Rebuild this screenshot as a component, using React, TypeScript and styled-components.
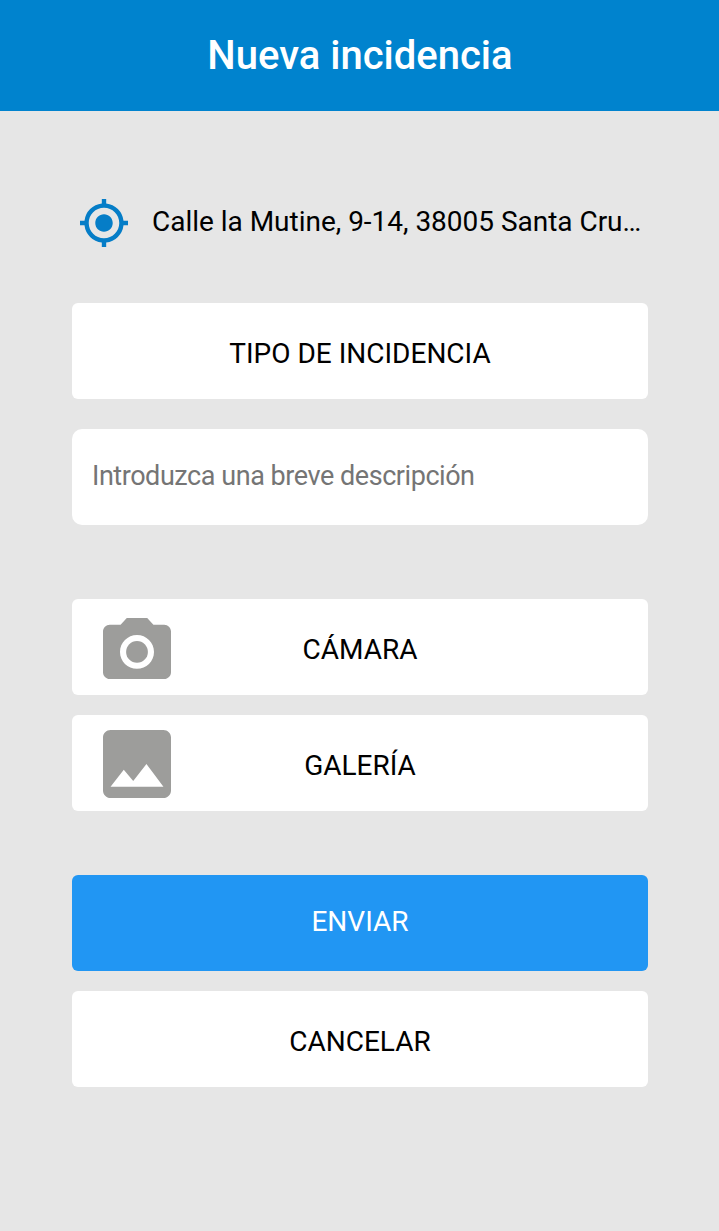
import React from "react";
import styled, { createGlobalStyle } from "styled-components";

const GlobalStyle = createGlobalStyle`
  * { box-sizing: border-box; }
  body { margin: 0; background: #e6e6e6; font-family: Roboto, "Liberation Sans", sans-serif; }
`;

const Screen = styled.div`
  min-height: 1231px;
  background: #e6e6e6;
`;

const Header = styled.header`
  display: flex;
  align-items: center;
  justify-content: center;
  height: 111px;
  padding-left: 1px;
  background: #0083ce;
`;

const Title = styled.h1`
  margin: 0;
  color: #fff;
  font-size: 40px;
  font-weight: 500;
  line-height: 48px;
`;

const Form = styled.main`
  display: flex;
  flex-direction: column;
  width: 576px;
  margin: 0 0 0 72px;
  padding-top: 87px;
`;

const Location = styled.div`
  display: flex;
  align-items: center;
  height: 50px;
  margin-bottom: 55px;
  padding-left: 8px;
  svg { flex: none; width: 48px; height: 48px; }
`;

const Address = styled.span`
  margin-left: 24px;
  width: 490px;
  overflow: hidden;
  white-space: nowrap;
  font-size: 28px;
  line-height: 40px;
  letter-spacing: -0.02px;
  padding-bottom: 3px;
`;

const Button = styled.button<{ $gap?: number; $primary?: boolean }>`
  display: grid;
  grid-template-columns: 130px 1fr 130px;
  align-items: center;
  width: 100%;
  height: 96px;
  margin: 0 0 ${(p) => p.$gap ?? 0}px;
  padding: ${(p) => (p.$primary ? "0 0 2px" : "6px 0 0")};
  border: 0;
  border-radius: 6px;
  background: ${(p) => (p.$primary ? "#2196f3" : "#fff")};
  color: ${(p) => (p.$primary ? "#fff" : "#000")};
  font: 400 28px/36px Roboto, "Liberation Sans", sans-serif;
`;

const Label = styled.span`
  grid-column: 2;
  grid-row: 1;
  white-space: nowrap;
  text-align: center;
`;

const IconSlot = styled.span`
  display: flex;
  grid-column: 1;
  grid-row: 1;
  padding: 0 0 4px 31px;
`;

const Description = styled.input`
  height: 96px;
  margin: 0 0 74px;
  padding: 0 20px 2px;
  border: 0;
  border-radius: 10px;
  background: #fff;
  font: 400 27px/36px Roboto, "Liberation Sans", sans-serif;
  letter-spacing: -0.45px;
  &::placeholder { color: #757575; opacity: 1; }
`;

const LocationIcon = () => (
  <svg viewBox="1 1 22 22" fill="#057dc7">
    <path d="M12 8c-2.210 0-4 1.790-4 4s1.790 4 4 4 4-1.790 4-4-1.790-4-4-4zm8.940 3A8.994 8.994 0 0 0 13 3.060V1h-2v2.060A8.994 8.994 0 0 0 3.060 11H1v2h2.060A8.994 8.994 0 0 0 11 20.940V23h2v-2.060A8.994 8.994 0 0 0 20.940 13H23v-2h-2.060zM12 19c-3.870 0-7-3.130-7-7s3.130-7 7-7 7 3.130 7 7-3.130 7-7 7z" />
  </svg>
);

const CameraIcon = () => (
  <svg width="68" height="61" viewBox="2 2 20 18" preserveAspectRatio="none" fill="#9d9d9b">
    <circle cx="12" cy="12" r="3.200" />
    <path d="M9 2 7.170 4H4c-1.100 0-2 .9-2 2v12c0 1.100.9 2 2 2h16c1.100 0 2-.9 2-2V6c0-1.100-.9-2-2-2h-3.170L15 2H9zm3 15c-2.760 0-5-2.240-5-5s2.240-5 5-5 5 2.240 5 5-2.240 5-5 5z" />
  </svg>
);

const GalleryIcon = () => (
  <svg width="68" height="68" viewBox="3 3 18 18" fill="#9d9d9b">
    <path d="M21 19V5c0-1.100-.9-2-2-2H5c-1.100 0-2 .9-2 2v14c0 1.100.9 2 2 2h14c1.100 0 2-.9 2-2zM8.500 13.500l2.500 3.010L14.500 12l4.500 6H5l3.500-4.500z" />
  </svg>
);

export default function App() {
  return (
    <Screen>
      <GlobalStyle />
      <Header><Title>Nueva incidencia</Title></Header>
      <Form>
        <Location>
          <LocationIcon />
          <Address>Calle la Mutine, 9-14, 38005 Santa Cru…</Address>
        </Location>
        <Button $gap={30}><Label>TIPO DE INCIDENCIA</Label></Button>
        <Description placeholder="Introduzca una breve descripción" />
        <Button $gap={20}><IconSlot><CameraIcon /></IconSlot><Label>CÁMARA</Label></Button>
        <Button $gap={64}><IconSlot><GalleryIcon /></IconSlot><Label>GALERÍA</Label></Button>
        <Button $gap={20} $primary><Label>ENVIAR</Label></Button>
        <Button><Label>CANCELAR</Label></Button>
      </Form>
    </Screen>
  );
}
